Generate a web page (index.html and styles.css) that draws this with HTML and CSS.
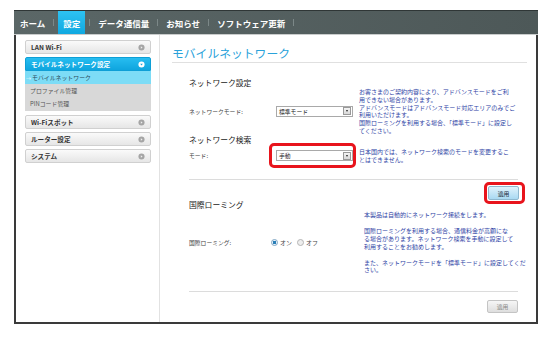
FILE: index.html
```html
<!DOCTYPE html>
<html lang="ja">
<head>
  <meta charset="UTF-8">
  <title>モバイルネットワーク</title>
  <link rel="stylesheet" href="styles.css">
</head>
<body>
<div class="frame">
  <!-- 上部メニュー -->
  <div class="nav">
    <span class="nav-item first">ホーム</span><span class="sep"></span>
    <span class="nav-item active">設定</span><span class="sep"></span>
    <span class="nav-item">データ通信量</span><span class="sep"></span>
    <span class="nav-item">お知らせ</span><span class="sep"></span>
    <span class="nav-item">ソフトウェア更新</span><span class="sep"></span>
  </div>

  <div class="main">
    <!-- 左側：設定メニュー -->
    <div class="sidebar">
      <div class="menu-item">
        <span>LAN Wi-Fi</span>
        <svg class="ico" viewBox="0 0 8 8"><circle cx="4" cy="4" r="3.5" fill="#a5a5a5"/><path d="M3.2 2.5 L5.2 4 L3.2 5.5 Z" fill="#eee"/></svg>
      </div>
      <div class="menu-group">
        <div class="menu-item open">
          <span>モバイルネットワーク設定</span>
          <svg class="ico" viewBox="0 0 8 8"><circle cx="4" cy="4" r="3.5" fill="#fff"/><path d="M2.5 3.2 L5.5 3.2 L4 5.2 Z" fill="#1aa6dc"/></svg>
        </div>
        <div class="submenu">
          <div class="sub current"><span class="arrow">→</span>モバイルネットワーク</div>
          <div class="sub">プロファイル管理</div>
          <div class="sub">PINコード管理</div>
        </div>
      </div>
      <div class="menu-item">
        <span>Wi-Fiスポット</span>
        <svg class="ico" viewBox="0 0 8 8"><circle cx="4" cy="4" r="3.5" fill="#a5a5a5"/><path d="M3.2 2.5 L5.2 4 L3.2 5.5 Z" fill="#eee"/></svg>
      </div>
      <div class="menu-item">
        <span>ルーター設定</span>
        <svg class="ico" viewBox="0 0 8 8"><circle cx="4" cy="4" r="3.5" fill="#a5a5a5"/><path d="M3.2 2.5 L5.2 4 L3.2 5.5 Z" fill="#eee"/></svg>
      </div>
      <div class="menu-item">
        <span>システム</span>
        <svg class="ico" viewBox="0 0 8 8"><circle cx="4" cy="4" r="3.5" fill="#a5a5a5"/><path d="M3.2 2.5 L5.2 4 L3.2 5.5 Z" fill="#eee"/></svg>
      </div>
    </div>

    <!-- 右側：モバイルネットワーク -->
    <div class="content">
      <h2 class="title">モバイルネットワーク</h2>
      <div class="body">
        <h3 class="first-head">ネットワーク設定</h3>
        <div class="row">
          <span class="label">ネットワークモード:</span>
          <div class="select"><span>標準モード</span><span class="drop"></span></div>
          <div class="note">
            お客さまのご契約内容により、アドバンスモードをご利<br>
            用できない場合があります。<br>
            アドバンスモードはアドバンスモード対応エリアのみでご<br>
            利用いただけます。<br>
            国際ローミングを利用する場合、「標準モード」に設定し<br>
            てください。
          </div>
        </div>

        <h3>ネットワーク検索</h3>
        <div class="row search">
          <span class="label">モード:</span>
          <div class="mark mark-select">
            <div class="select"><span>手動</span><span class="drop"></span></div>
          </div>
          <div class="note">
            日本国内では、ネットワーク検索のモードを変更するこ<br>
            とはできません。
          </div>
        </div>

        <div class="line"></div>
        <div class="btn-row">
          <div class="mark mark-btn"><button class="btn primary">適用</button></div>
        </div>

        <h3>国際ローミング</h3>
        <div class="row roaming">
          <span class="label">国際ローミング:</span>
          <div class="radios">
            <span class="radio on"></span><span class="radio-text">オン</span>
            <span class="radio"></span><span class="radio-text">オフ</span>
          </div>
          <div class="note">
            <p>本製品は自動的にネットワーク接続をします。</p>
            <p>国際ローミングを利用する場合、通信料金が高額にな<br>
            る場合があります。ネットワーク検索を手動に設定して<br>
            利用することをお勧めします。</p>
            <p>また、ネットワークモードを「標準モード」に設定してくだ<br>
            さい。</p>
          </div>
        </div>

        <div class="line bottom-line"></div>
        <div class="btn-row bottom-row">
          <button class="btn">適用</button>
        </div>
      </div>
    </div>
  </div>
</div>
</body>
</html>
```

FILE: styles.css
```css
body {
  margin: 0;
  background: #fff;
  font-family: "Noto Sans CJK JP", "Liberation Sans", sans-serif;
  color: #333;
}

/* 外枠 */
.frame {
  margin: 10px 0 0 14px;
  width: 524px;
  height: 314px;
  box-sizing: border-box;
  border: 2px solid #3a3a3a;
  border-top: 0;
  display: flex;
  flex-direction: column;
}

/* 上部メニュー */
.nav {
  height: 23px;
  margin: 0 -2px;
  padding-left: 2px;
  background: linear-gradient(90deg, #5b6767, #4d5858);
  border-top: 1px solid #2f3636;
  border-bottom: 1px solid #c9cccc;
  display: flex;
  align-items: stretch;
  flex-shrink: 0;
}
.nav-item {
  color: #fff;
  font-size: 8.5px;
  font-weight: bold;
  padding: 0 8px;
  display: flex;
  align-items: center;
  white-space: nowrap;
}
.nav-item.first {
  padding-left: 4px;
}
.nav-item.active {
  background: linear-gradient(#2ec2f2, #10a8e0);
  margin: 0 4px;
  padding: 0 5px;
}
.sep {
  width: 1px;
  height: 7px;
  align-self: center;
  background: #7c8888;
}

.main {
  flex: 1;
  display: flex;
  min-height: 0;
}

/* 左側メニュー */
.sidebar {
  width: 144px;
  flex-shrink: 0;
  box-sizing: border-box;
  border-right: 1px solid #e2e2e2;
  padding: 5px 8px 0 9px;
}
.menu-item {
  height: 14px;
  box-sizing: border-box;
  border: 1px solid #d0d0d0;
  border-radius: 2px;
  background: linear-gradient(#fafafa, #e6e6e6);
  display: flex;
  align-items: center;
  justify-content: space-between;
  padding: 0 5px 0 5px;
  font-size: 6.6px;
  font-weight: bold;
  color: #333;
  margin-bottom: 3px;
  white-space: nowrap;
}
.ico {
  width: 7px;
  height: 7px;
}
.menu-group {
  margin-bottom: 4px;
}
.menu-item.open {
  background: linear-gradient(#27bdf0, #0fa5de);
  border-color: #0e9fd6;
  color: #fff;
  margin-bottom: 0;
  border-radius: 2px 2px 0 0;
}
.submenu {
  background: #d8d8d8;
  padding-bottom: 1px;
}
.sub {
  height: 13px;
  display: flex;
  align-items: center;
  padding-left: 5px;
  font-size: 5.9px;
  color: #555;
}
.sub.current {
  background: #7ddcf6;
  color: #2b4b5a;
  padding-left: 1px;
}
.arrow {
  font-size: 5px;
  margin-right: 1px;
  color: #fff;
}

/* 右側コンテンツ */
.content {
  flex: 1;
  min-width: 0;
  padding: 10px 9px 0 12px;
}
.title {
  margin: 0;
  font-size: 11.8px;
  font-weight: normal;
  color: #2aa2da;
  line-height: 15px;
  padding-bottom: 2px;
  border-bottom: 1px solid #e0e0e0;
}
.body {
  padding: 0 9px 0 17px;
}
h3 {
  margin: 0;
  font-size: 7.8px;
  font-weight: normal;
  color: #222;
  line-height: 10px;
}
h3.first-head {
  margin-top: 15px;
}
.row {
  display: grid;
  grid-template-columns: 87px 83px 1fr;
  align-items: center;
}
.label {
  font-size: 5.8px;
  color: #444;
  white-space: nowrap;
}
.note {
  font-size: 6px;
  line-height: 7.8px;
  color: #2e3fa5;
  white-space: nowrap;
}
.note p {
  margin: 0 0 8px;
}
.note p:last-child {
  margin-bottom: 0;
}

/* プルダウン */
.select {
  width: 77px;
  height: 11px;
  box-sizing: border-box;
  border: 1px solid #a9a9a9;
  background: #fff;
  display: flex;
  align-items: center;
  justify-content: space-between;
  font-size: 5.8px;
  color: #222;
  padding-left: 2px;
}
.drop {
  width: 8px;
  height: 8px;
  margin-right: 1px;
  box-sizing: border-box;
  border: 1px solid #999;
  background: linear-gradient(#f4f4f4, #d8d8d8);
  position: relative;
}
.drop::after {
  content: "";
  position: absolute;
  left: 1.5px;
  top: 2px;
  border-left: 1.5px solid transparent;
  border-right: 1.5px solid transparent;
  border-top: 2px solid #222;
}

/* 赤枠（注目箇所） */
.mark {
  border: 3px solid #e8141c;
  border-radius: 5px;
  justify-self: start;
}
.mark-select {
  padding: 4px 0 4px 4px;
  margin: -7px 0 -7px -7px;
}
.search {
  margin-top: 3px;
}

.line {
  border-top: 1px solid #dcdcdc;
  margin-top: 16px;
}
.btn-row {
  display: flex;
  justify-content: flex-end;
  margin-top: 7px;
}
.mark-btn {
  padding: 1px 3px 1px 1px;
  margin: -5px -7px -4px -4px;
}
.btn {
  width: 31px;
  height: 14px;
  padding: 0;
  font-family: inherit;
  font-size: 5.8px;
  color: #888;
  border: 1px solid #c4c4c4;
  border-radius: 2px;
  background: linear-gradient(#f6f6f6, #dedede);
  display: block;
}
.btn.primary {
  color: #1a2a3a;
  border-color: #8fb8cf;
  background: linear-gradient(#dff2fc, #a9d9f2);
}

.roaming {
  margin-top: 1px;
}
.roaming .note {
  padding-left: 5px;
}
.radios {
  display: flex;
  align-items: center;
  font-size: 6px;
  color: #444;
  margin-left: -5px;
}
.radio {
  width: 5px;
  height: 5px;
  border-radius: 50%;
  border: 1px solid #b5b5b5;
  background: #eee;
  margin-right: 2px;
}
.radio.on {
  background: radial-gradient(circle, #2a7fb8 45%, #e8f2fa 55%);
  border-color: #7fa6c4;
}
.radio-text {
  margin-right: 5px;
}
.bottom-line {
  margin-top: 17px;
}
.bottom-row {
  margin-top: 8px;
}
.bottom-row .btn {
  height: 13px;
}
```
